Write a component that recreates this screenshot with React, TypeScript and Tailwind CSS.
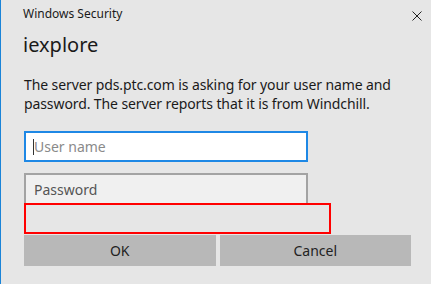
import React from "react";

const font = { fontFamily: '"Noto Sans", "Open Sans", sans-serif' };

export default function App() {
  return (
    <div
      className="w-[431px] h-[284px] bg-[#e6e6e6] border-l border-[#1a84d8] overflow-hidden text-[#1a1a1a]"
      style={font}
    >
      <div className="flex items-start justify-between pl-[22px] pr-[9px] pt-[6px]">
        <div className="text-[12px] leading-[16px]">Windows Security</div>
        <svg width="10" height="10" viewBox="0 0 10 10" className="mt-[5px]">
          <path d="M0.5 0.5 L9.5 9.5 M9.5 0.5 L0.5 9.5" stroke="#222" strokeWidth="1" />
        </svg>
      </div>
      <div className="pl-[23px] pr-[20px]">
        <div className="mt-[9px] text-[20px] leading-[28px] -ml-px">iexplore</div>
        <p className="mt-[16px] text-[14px] leading-[19px] tracking-[-0.1px]">
          The server pds.ptc.com is asking for your user name and password. The server reports that it is from
          Windchill.
        </p>
        <div className="mt-[18px] w-[284px] h-[31px] bg-white border-2 border-[#1e88e5] flex items-center pl-[7px]">
          <span className="w-px h-[16px] bg-[#333]" />
          <span className="text-[14px] text-[#8a8a8a]">User name</span>
        </div>
        <div className="mt-[11px] w-[284px] h-[30px] bg-[#f0f0f0] border-2 border-b-0 border-[#a3a3a3] flex items-center pl-[8px]">
          <span className="text-[14px] text-[#555]">Password</span>
        </div>
        <div className="w-[307px] h-[31px] border-2 border-[#ff0000]" />
        <div className="mt-px flex gap-[4px]">
          <button className="w-[193px] h-[31px] bg-[#b8b8b8] text-[14px] text-[#222]">OK</button>
          <button className="w-[193px] h-[31px] bg-[#b8b8b8] text-[14px] text-[#222]">Cancel</button>
        </div>
      </div>
    </div>
  );
}
